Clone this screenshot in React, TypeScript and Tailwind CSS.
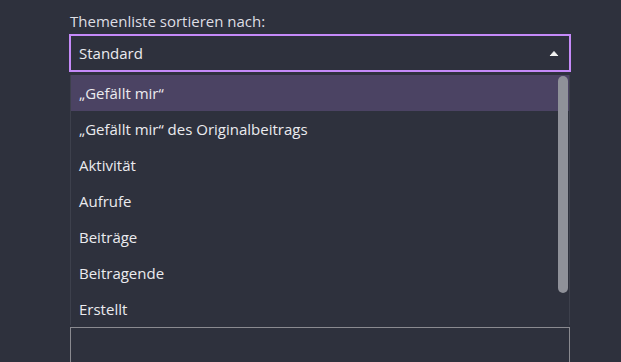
import React from 'react';

const options = [
  '„Gefällt mir“',
  '„Gefällt mir“ des Originalbeitrags',
  'Aktivität',
  'Aufrufe',
  'Beiträge',
  'Beitragende',
  'Erstellt',
];

export default function App() {
  return (
    <div
      className="w-[621px] h-[362px] overflow-hidden bg-[#2e313d] text-[#ebebef] pl-[69px] pr-[50px] pt-[11px]"
      style={{ fontFamily: '"Open Sans", sans-serif' }}
    >
      <div className="text-[15px] leading-[21px] mb-[2px] pl-[1px] text-[#dedee4]">Themenliste sortieren nach:</div>

      {/* Select */}
      <div className="relative">
        <div className="h-[38px] border-2 border-[#c58af9] flex items-center justify-between pl-[8px] pr-[10px] pt-[1px] text-[15px]">
          <span>Standard</span>
          <svg width="10" height="6" viewBox="0 0 10 6" className="mb-[1px]">
            <path d="M1 6 L5 1.5 L9 6 Z" fill="#f2f2f2" stroke="#f2f2f2" strokeWidth="1" strokeLinejoin="round" />
          </svg>
        </div>

        {/* Options list */}
        <div className="relative mt-[3px] ml-[1px] w-[500px] h-[250px] bg-[#2e313d] border-l border-r border-[#3d404c] overflow-hidden">
          {options.map((o, i) => (
            <div
              key={o}
              className={`h-[36px] flex items-center pl-[8px] pt-[1px] text-[15px] ${i === 0 ? 'bg-[#4b4363]' : ''}`}
            >
              {o}
            </div>
          ))}
          <div className="absolute right-[1px] top-[1px] w-[10px] h-[217px] rounded-full bg-[#8f9199]" />
        </div>

        {/* Next field underneath */}
        <div className="ml-[1px] mt-[2px] w-[500px] h-[40px] border-t border-l border-r border-[#8a8a90]" />
      </div>
    </div>
  );
}
